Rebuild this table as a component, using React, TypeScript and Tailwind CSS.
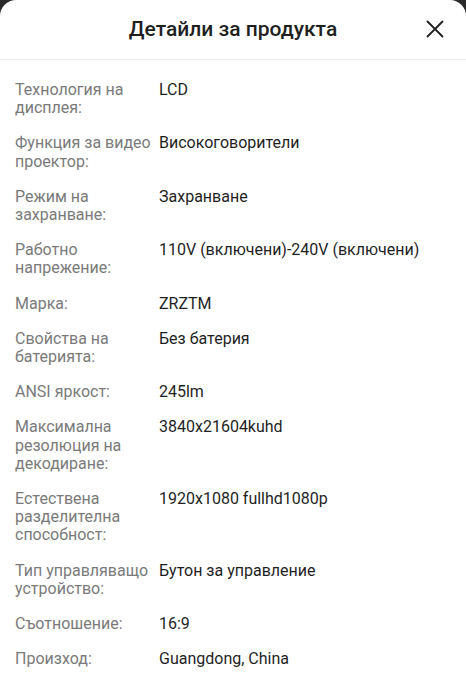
import React from 'react';

const rows: [string, string][] = [
  ['Технология на дисплея:', 'LCD'],
  ['Функция за видео проектор:', 'Високоговорители'],
  ['Режим на захранване:', 'Захранване'],
  ['Работно напрежение:', '110V (включени)-240V (включени)'],
  ['Марка:', 'ZRZTM'],
  ['Свойства на батерията:', 'Без батерия'],
  ['ANSI яркост:', '245lm'],
  ['Максимална резолюция на декодиране:', '3840x21604kuhd'],
  ['Естествена разделителна способност:', '1920x1080 fullhd1080p'],
  ['Тип управляващо устройство:', 'Бутон за управление'],
  ['Съотношение:', '16:9'],
  ['Произход:', 'Guangdong, China'],
];

export default function App() {
  return (
    <div className="w-[466px] h-[699px] overflow-hidden bg-[#2a2a2a]" style={{ fontFamily: 'Roboto, "Noto Sans", sans-serif' }}>
      <div className="h-full bg-white rounded-t-[16px]">
        <div className="relative h-[60px] flex items-center justify-center border-b border-[#ececec]">
          <h2 className="text-[21px] font-medium text-[#1f1f1f]">Детайли за продукта</h2>
          <button type="button" className="absolute right-[22px] top-[20px] w-[18px] h-[18px] flex items-center justify-center">
            <svg width="18" height="18" viewBox="0 0 18 18" fill="none" stroke="#1f1f1f" strokeWidth="1.8" strokeLinecap="round">
              <path d="M1.5 1.5 L16.5 16.5 M16.5 1.5 L1.5 16.5" />
            </svg>
          </button>
        </div>
        <div className="pt-[21px] px-[15px] flex flex-col gap-[17px] text-[16px] leading-[18.2px]">
          {rows.map(([label, value]) => (
            <div key={label} className="flex">
              <div className="w-[144px] shrink-0 pr-[3px] text-[#7a7a7a]">{label}</div>
              <div className="flex-1 text-[#1f1f1f]">{value}</div>
            </div>
          ))}
        </div>
      </div>
    </div>
  );
}
